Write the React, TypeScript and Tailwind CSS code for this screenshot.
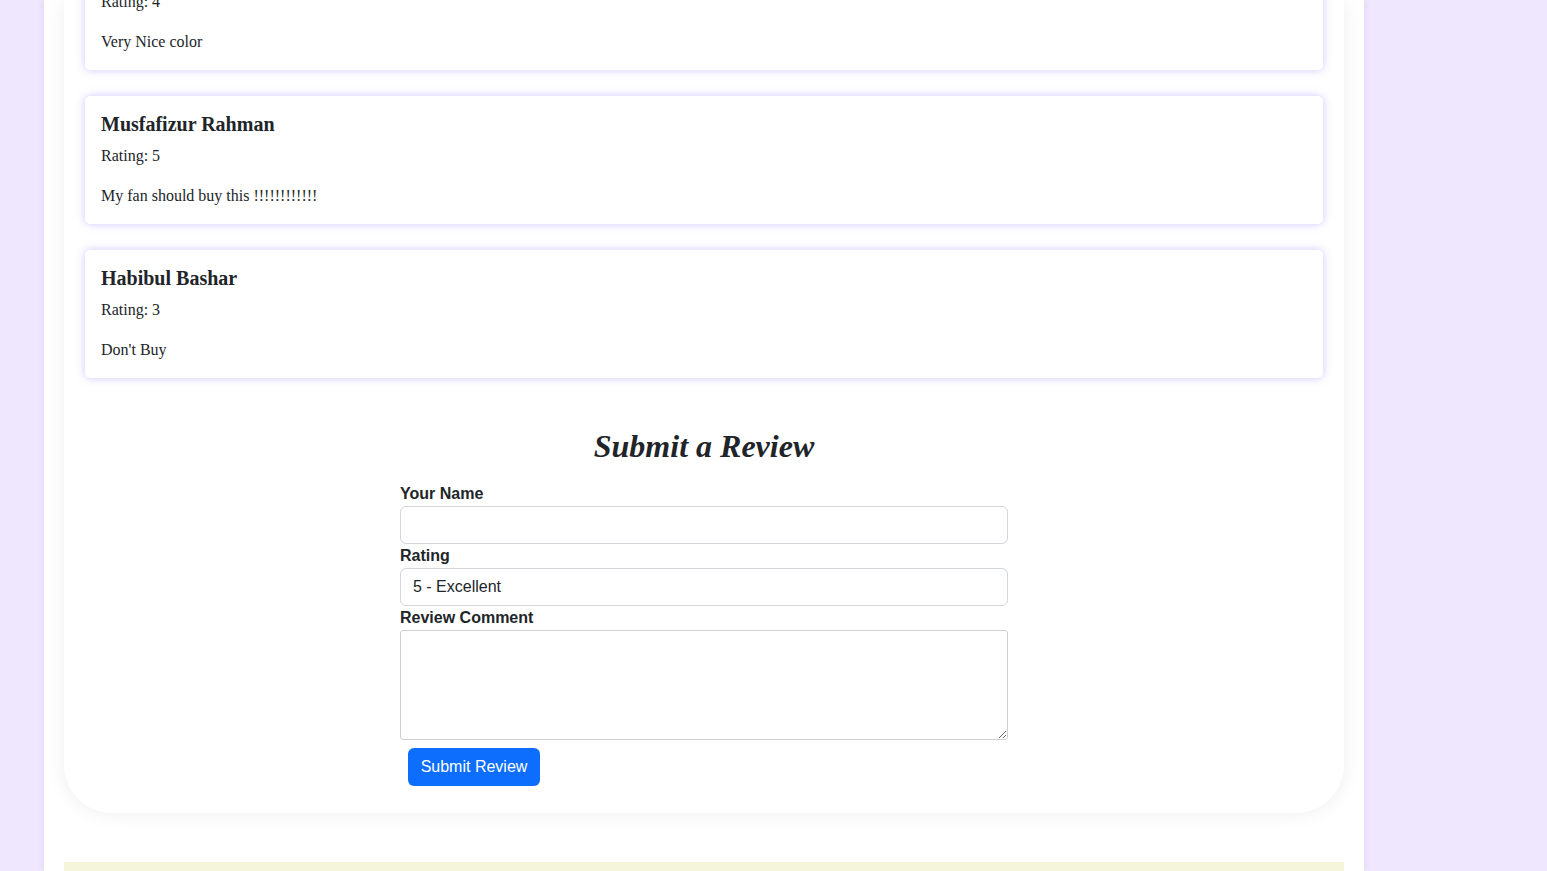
const reviews = [
  { name: "Placeholder", rating: 4, comment: "Very Nice color" },
  { name: "Musfafizur Rahman", rating: 5, comment: "My fan should buy this !!!!!!!!!!!!" },
  { name: "Habibul Bashar", rating: 3, comment: "Don't Buy" },
];

function ReviewCard({ name, rating, comment }: { name: string; rating: number; comment: string }) {
  return (
    <div className="rounded-[5px] bg-white px-4 py-4 shadow-[0_0_9px_rgba(120,90,255,0.35)]">
      <h5 className="mb-2 text-[20px] font-bold leading-6">{name}</h5>
      <p className="mb-4 leading-6">Rating: {rating}</p>
      <p className="leading-6">{comment}</p>
    </div>
  );
}

export default function App() {
  return (
    <div className="h-[871px] overflow-hidden bg-[#efe7fd] font-['Liberation_Serif',serif] text-[#212529]">
      <div className="ml-[44px] flex h-full w-[1320px] flex-col bg-white px-5 shadow-[0_0_6px_rgba(120,90,200,0.15)]">
        <div className="rounded-b-[48px] bg-white px-[21px] pb-[27px] shadow-[0_0_20px_rgba(0,0,0,0.07)]">
          <div className="-mt-[58px] flex flex-col gap-[26px]">
            {reviews.map((r) => (
              <ReviewCard key={r.name} {...r} />
            ))}
          </div>

          <h3 className="mt-[49px] mb-[19px] text-center text-[32px] font-bold italic leading-[38px]">
            Submit a Review
          </h3>

          <form className="mx-auto flex w-[608px] flex-col font-['Liberation_Sans',sans-serif]">
            <label className="mb-[3px] block pt-px text-base font-bold leading-[18px]">Your Name</label>
            <input
              type="text"
              className="h-[38px] rounded-[6px] border border-[#d3d6da] px-3 outline-none"
            />
            <label className="mt-[2px] mb-[3px] block pt-px text-base font-bold leading-[18px]">Rating</label>
            <select className="h-[38px] appearance-none rounded-[6px] border border-[#d3d6da] bg-white px-3 text-base outline-none">
              <option>5 - Excellent</option>
              <option>4 - Very Good</option>
              <option>3 - Good</option>
              <option>2 - Fair</option>
              <option>1 - Poor</option>
            </select>
            <label className="mt-[2px] mb-[3px] block pt-px text-base font-bold leading-[18px]">Review Comment</label>
            <textarea className="h-[110px] rounded-[3px] border border-[#cfcfcf] px-3 py-1.5 outline-none" />
            <div>
              <button
                type="button"
                className="mt-2 ml-2 h-[38px] w-[132px] rounded-[6px] bg-[#0d6efd] text-base text-white"
              >
                Submit Review
              </button>
            </div>
          </form>
        </div>

        <div className="mt-[49px] flex-1 bg-[#f5f5dc]" />
      </div>
    </div>
  );
}
